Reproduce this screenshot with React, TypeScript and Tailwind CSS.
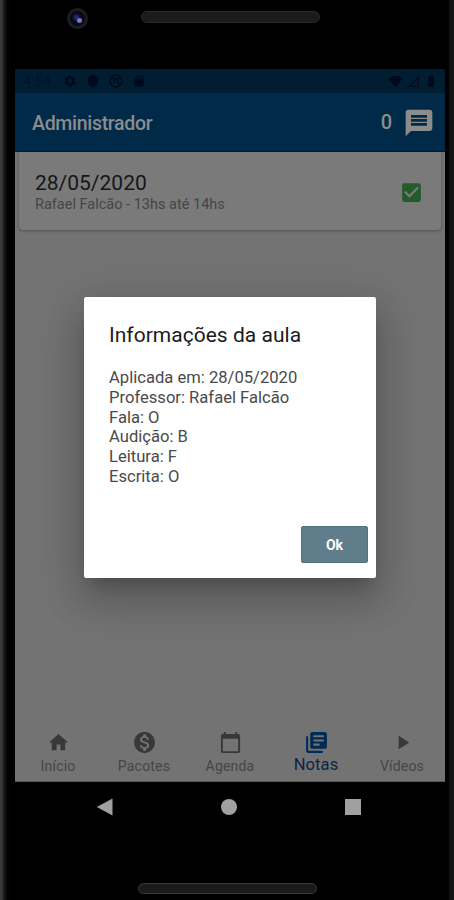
import type { ReactNode } from "react";
import {
  MdCheckBox,
  MdHome,
  MdLibraryBooks,
  MdMessage,
  MdMonetizationOn,
  MdPlayArrow,
  MdSettings,
  MdSdCard,
  MdSignalWifi4Bar,
  MdBatteryFull,
  MdCalendarToday,
  MdShield,
  MdSignalCellularNull,
} from "react-icons/md";

function StatusBar() {
  return (
    <div className="flex h-6 items-center bg-[#001d32] pl-2 pr-[7px] text-[#000a1c]">
      <span className="w-[40px] text-[14px] leading-6 tracking-[0.4px] text-[#00122a]">4:54</span>
      <div className="flex flex-1 items-center gap-[9px]">
        <MdSettings size={14} />
        <MdShield size={14} />
        <svg width="14" height="14" viewBox="0 0 14 14" fill="none" stroke="currentColor" strokeWidth="1.3">
          <circle cx="7" cy="7" r="6" />
          <path d="M2.5 2.5 11.5 11.5M4.7 10V5M9.3 9V4.5L6.5 4.2" />
        </svg>
        <MdSdCard size={14} />
      </div>
      <div className="flex items-center gap-1">
        <MdSignalWifi4Bar size={15} />
        <MdSignalCellularNull size={13} />
        <MdBatteryFull size={14} />
      </div>
    </div>
  );
}

function AppBar() {
  return (
    <header className="flex h-[59px] items-center border-b border-[#001a38] bg-[#002a48] pl-[17px] pr-[10px] text-[#8c8c8c]">
      <h1 className="flex-1 pt-[3px] text-[19.5px] font-medium leading-6 tracking-[-0.3px]">Administrador</h1>
      <span className="mr-[11px] text-[20px] font-medium leading-6">0</span>
      <MdMessage size={32} className="mt-px" />
    </header>
  );
}

function LessonCard() {
  return (
    <article className="mx-1 flex h-[78px] items-center rounded-b-[4px] bg-[#7a7a7a] pl-4 pr-[17px] pt-[3px] shadow-[0_1px_3px_rgba(0,0,0,0.3)]">
      <div className="flex-1">
        <h2 className="text-[21px] leading-6 text-[#161616]">28/05/2020</h2>
        <p className="text-[14.5px] leading-5 text-[#454545]">Rafael Falcão - 13hs até 14hs</p>
      </div>
      <MdCheckBox size={25} className="text-[#225c2a]" />
    </article>
  );
}

function Tab({ icon, label, active }: { icon: ReactNode; label: string; active?: boolean }) {
  return (
    <div
      className={
        active
          ? "flex flex-1 flex-col items-center pt-[2px] text-[16.5px] leading-[21px] tracking-[0.1px] text-[#0c2447]"
          : "flex flex-1 flex-col items-center pt-[2px] text-[14px] leading-6 tracking-[0.2px] text-[#464646]"
      }
    >
      <span className={active ? "flex h-6 items-center text-[#002b55]" : "flex h-6 items-center text-[#383838]"}>
        {icon}
      </span>
      <span>{label}</span>
    </div>
  );
}

function LessonDialog() {
  return (
    <section className="absolute left-[69px] top-[228px] flex h-[281px] w-[292px] flex-col rounded-[2px] bg-white pl-[25px] pr-2 pt-[24px] shadow-[0_11px_15px_-7px_rgba(0,0,0,0.2),0_24px_38px_3px_rgba(0,0,0,0.14),0_9px_46px_8px_rgba(0,0,0,0.12)]">
      <h2 className="text-[21px] leading-7 tracking-[0.02px] text-[#1b1b1b]">Informações da aula</h2>
      <div className="mt-[19px] text-[16.6px] leading-[19.8px] text-[#4a4a4a]">
        <p>Aplicada em: 28/05/2020</p>
        <p>Professor: Rafael Falcão</p>
        <p>Fala: O</p>
        <p>Audição: B</p>
        <p>Leitura: F</p>
        <p>Escrita: O</p>
      </div>
      <button className="mb-[15px] ml-auto mt-auto h-[37px] w-[67px] rounded-[2px] border border-[#4f7080] bg-[#607d8b] text-[14px] font-bold leading-5 text-white">
        Ok
      </button>
    </section>
  );
}

export default function App() {
  return (
    <main className="flex h-[900px] w-[454px] overflow-hidden bg-black font-['Roboto','Liberation_Sans',sans-serif]">
      <div className="w-[15px] shrink-0 bg-[linear-gradient(90deg,#3a3a3a_0,#343434_3px,#0c0c0c_4px,#1a1a1a_5px,#020202_7px,#000_15px)]" />
      <div className="flex w-[430px] shrink-0 flex-col">
        <div className="flex h-[69px] items-start">
          <div className="ml-[52px] mt-[8px] flex size-[21px] items-center justify-center rounded-full border-[3px] border-[#1d1d1d] bg-[#08081a]">
            <div className="ml-[3px] mt-[3px] size-[5px] rounded-full bg-[#7878c8] shadow-[-3px_-3px_3px_#3c3c90]" />
          </div>
          <div className="ml-[53px] mt-[11px] h-3 w-[179px] rounded-full border border-[#2a2927] bg-[#1c1b1a]" />
        </div>
        <div className="relative flex h-[713px] flex-col bg-[#737373]">
          <StatusBar />
          <AppBar />
          <LessonCard />
          <nav className="mt-auto flex h-[54px] border-b border-[#555555]">
            <Tab icon={<MdHome size={23} />} label="Início" />
            <Tab icon={<MdMonetizationOn size={25} />} label="Pacotes" />
            <Tab icon={<MdCalendarToday size={23} />} label="Agenda" />
            <Tab icon={<MdLibraryBooks size={25} />} label="Notas" active />
            <Tab icon={<MdPlayArrow size={23} />} label="Vídeos" />
          </nav>
          <LessonDialog />
        </div>
        <div className="flex h-[49px] items-center justify-between pl-[81px] pr-[84px]">
          <svg width="17" height="18" viewBox="0 0 17 18" fill="#a0a0a0">
            <path d="M0.8 9 16.5 0.5V17.5Z" />
          </svg>
          <div className="size-4 rounded-full bg-[#a0a0a0]" />
          <div className="size-4 bg-[#a0a0a0]" />
        </div>
        <div className="ml-[123px] mt-auto mb-[6px] h-[11px] w-[179px] rounded-full border border-[#3a3937] bg-[#1c1b1a]" />
      </div>
      <div className="flex-1 bg-[linear-gradient(90deg,#000_0,#000_3px,#111_5px,#171717_9px)]" />
    </main>
  );
}
